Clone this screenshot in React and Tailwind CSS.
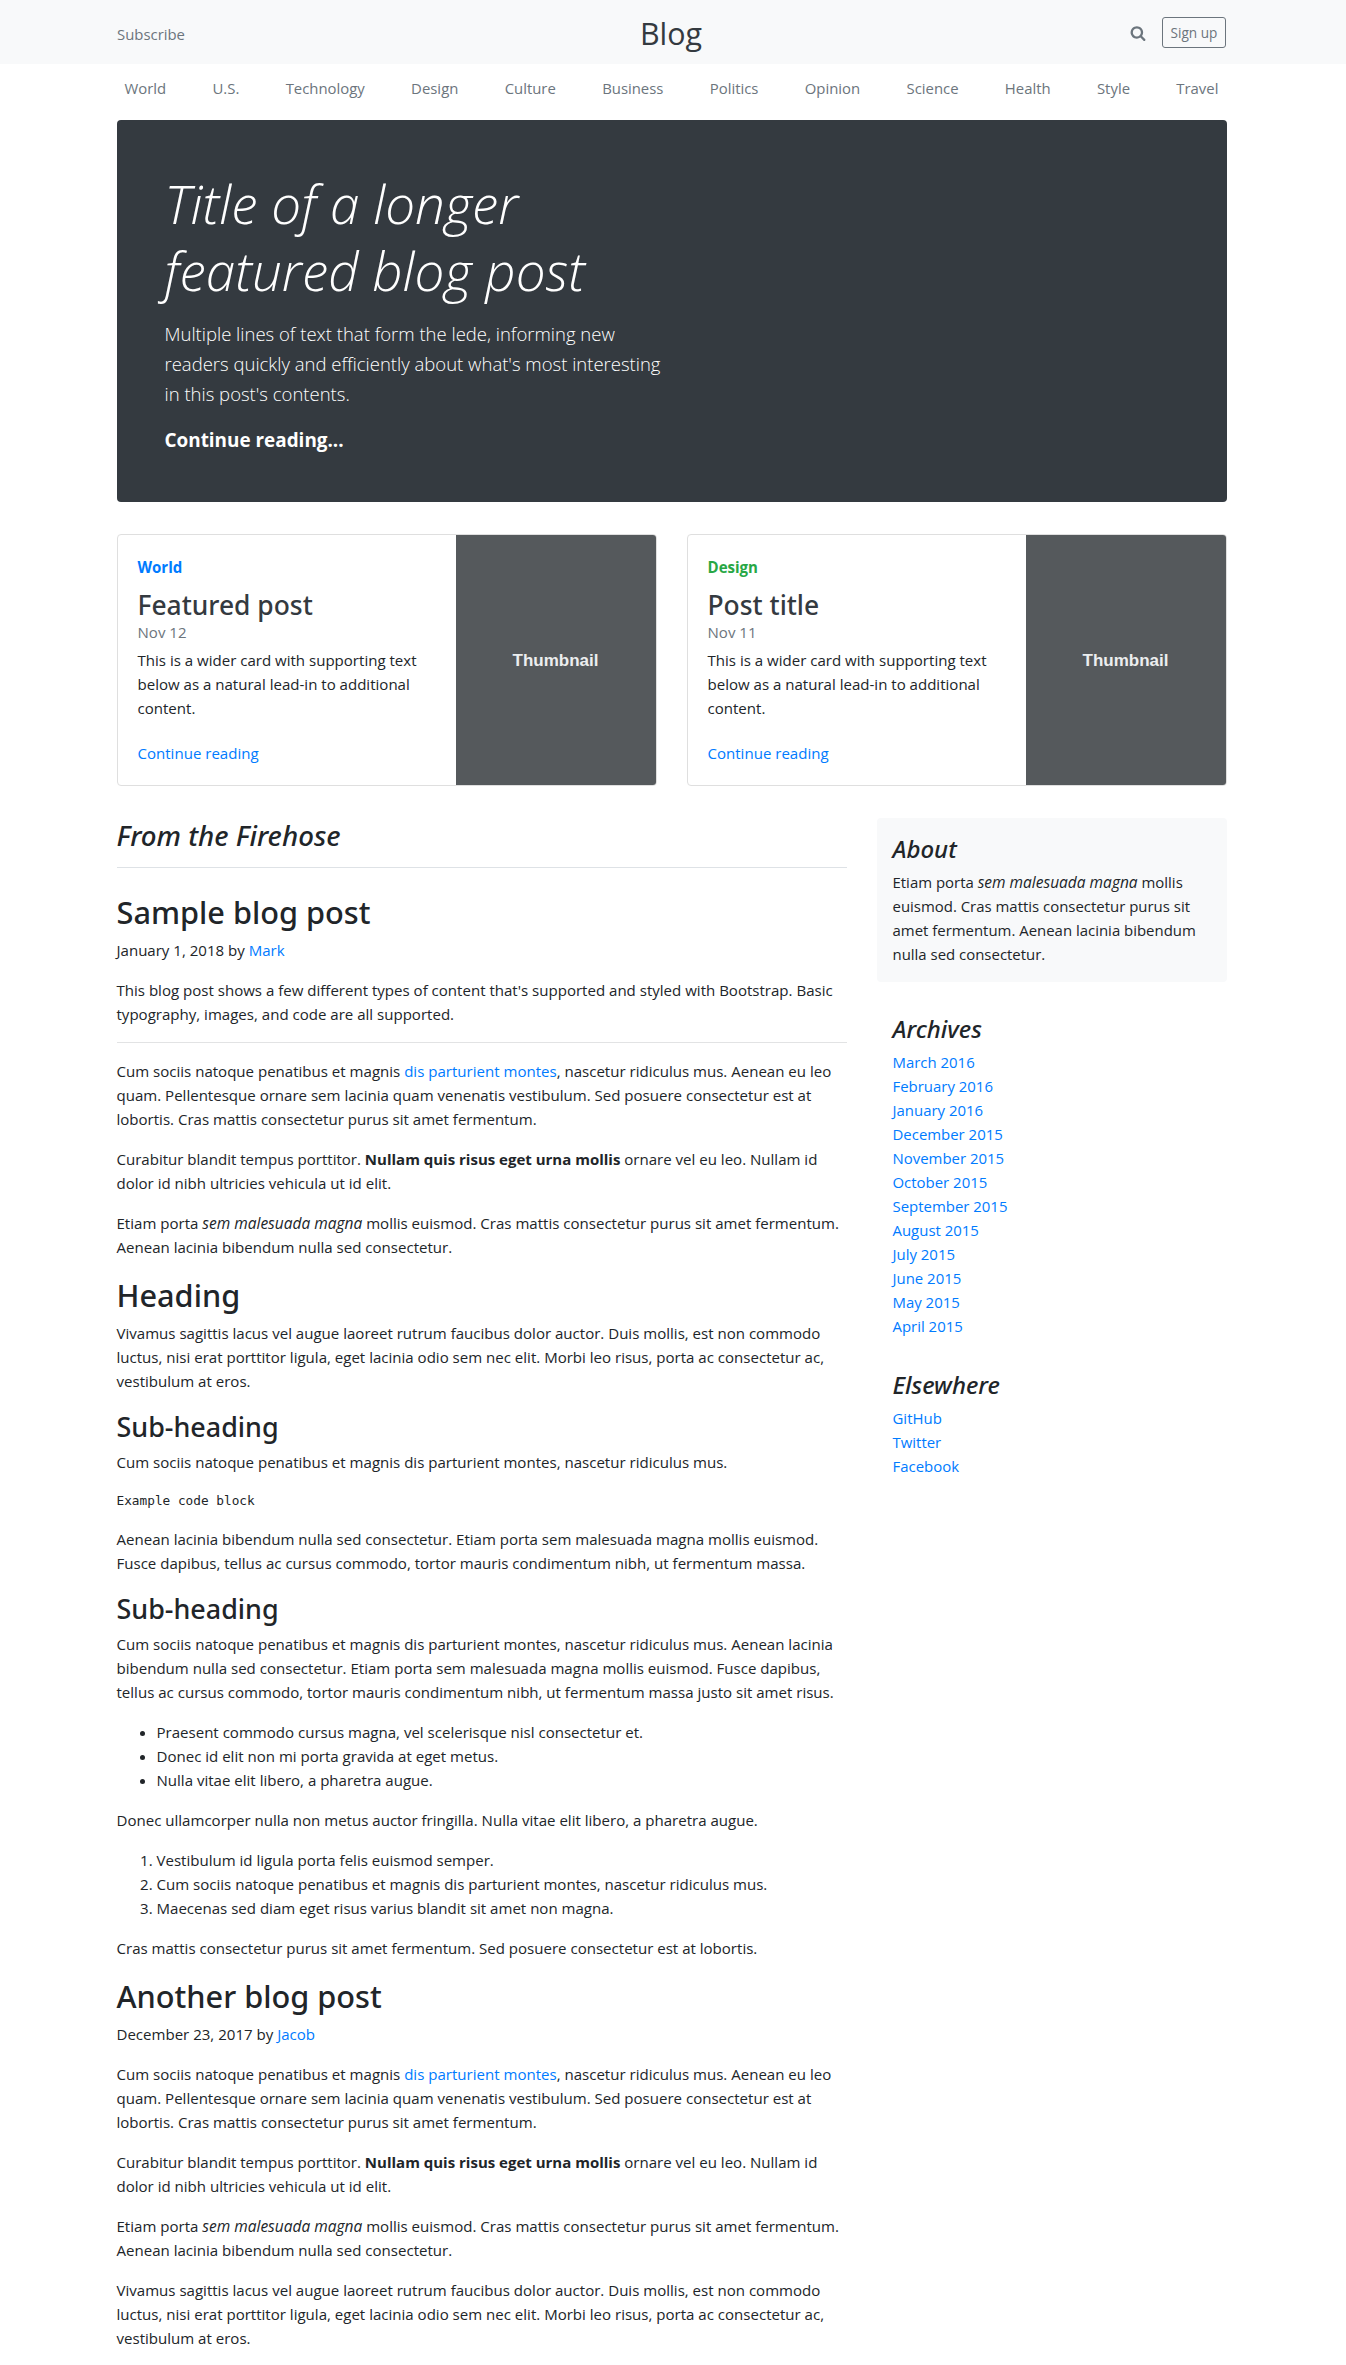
import React from "react";

const NAV = ["World", "U.S.", "Technology", "Design", "Culture", "Business", "Politics", "Opinion", "Science", "Health", "Style", "Travel"];
const ARCHIVES = [
  "March 2016", "February 2016", "January 2016", "December 2015", "November 2015", "October 2015",
  "September 2015", "August 2015", "July 2015", "June 2015", "May 2015", "April 2015",
];
const ELSEWHERE = ["GitHub", "Twitter", "Facebook"];

const Link = ({ children }) => <a className="text-[#007bff]">{children}</a>;
const Em = ({ children }) => <em className="text-[15.5px] leading-none italic">{children}</em>;

function Lines({ lines }) {
  return lines.map((line, i) => (
    <span key={i} className="block whitespace-nowrap">{line}</span>
  ));
}

function P({ lines }) {
  return <p className="mb-4"><Lines lines={lines} /></p>;
}

function H2({ children }) {
  return <h2 className="mb-[7px] pt-px font-['Noto_Sans',sans-serif] text-[30.7px] leading-[38px] font-medium">{children}</h2>;
}

function H3({ children }) {
  return <h3 className="mb-[7px] pt-px font-['Noto_Sans',sans-serif] text-[26.9px] leading-[33px] font-medium">{children}</h3>;
}

function H4({ children }) {
  return <h4 className="mb-[7px] pt-px font-['Noto_Sans',sans-serif] text-[24px] leading-[28px] font-medium italic">{children}</h4>;
}

function SearchIcon() {
  return (
    <svg className="mr-4 size-4" viewBox="0 0 1792 1792" fill="#6c757d">
      <path d="M1216 832q0-185-131.500-316.500t-316.500-131.500-316.500 131.500-131.500 316.500 131.500 316.500 316.500 131.500 316.500-131.500 131.500-316.500zm512 832q0 52-38 90t-90 38q-54 0-90-38l-343-342q-179 124-399 124-143 0-273.500-55.500t-225-150-150-225-55.500-273.500 55.500-273.500 150-225 225-150 273.500-55.500 273.500 55.500 225 150 150 225 55.500 273.500q0 220-124 399l343 343q37 37 37 90z" />
    </svg>
  );
}

function Header() {
  return (
    <header className="bg-[#f8f9fa] text-[#6c757d]">
      <div className="ml-[116px] grid h-16 w-[1110px] grid-cols-3 items-center">
        <a className="pt-[3px] pl-px text-[14.9px]">Subscribe</a>
        <a className="pt-[3px] text-center text-[30.400px] leading-[48px] text-[#343a40]">Blog</a>
        <div className="flex items-center justify-end pt-px">
          <SearchIcon />
          <a className="flex h-[31px] w-[64px] items-center justify-center rounded-[3px] border border-[#6c757d] text-[13.6px]">Sign up</a>
        </div>
      </div>
    </header>
  );
}

function Hero() {
  return (
    <section className="mb-8 h-[382px] rounded bg-[#343a40] p-12 text-white">
      <h1 className="mb-[15px] pt-[2px] text-[53px] leading-[67px] font-light italic">
        <Lines lines={["Title of a longer", "featured blog post"]} />
      </h1>
      <p className="mb-4 text-[18.500px] leading-[30px] font-light">
        <Lines lines={["Multiple lines of text that form the lede, informing new", "readers quickly and efficiently about what's most interesting", "in this post's contents."]} />
      </p>
      <p className="text-[18.900px] leading-[30px] font-bold">Continue reading...</p>
    </section>
  );
}

function Card({ category, color, title, date }) {
  return (
    <div className="flex h-[252px] overflow-hidden rounded border border-[#dfdfdf]">
      <div className="flex flex-1 flex-col items-start p-5">
        <strong className={`mb-2 font-bold ${color}`}>{category}</strong>
        <h3 className="pt-[4px] font-['Noto_Sans',sans-serif] text-[26.400px] leading-[29px] font-medium text-[#343a40]">{title}</h3>
        <div className="mb-1 text-[#6c757d]">{date}</div>
        <p className="mb-auto">
          <Lines lines={["This is a wider card with supporting text", "below as a natural lead-in to additional", "content."]} />
        </p>
        <Link>Continue reading</Link>
      </div>
      <div className="flex w-[200px] items-center justify-center bg-[#55595c] pt-px font-['Liberation_Sans',sans-serif] text-[17px] font-bold text-[#eceeef]">Thumbnail</div>
    </div>
  );
}

const Cum = () => (
  <P lines={[
    <>Cum sociis natoque penatibus et magnis <Link>dis parturient montes</Link>, nascetur ridiculus mus. Aenean eu leo</>,
    "quam. Pellentesque ornare sem lacinia quam venenatis vestibulum. Sed posuere consectetur est at",
    "lobortis. Cras mattis consectetur purus sit amet fermentum.",
  ]} />
);
const Curabitur = () => (
  <P lines={[
    <>Curabitur blandit tempus porttitor. <strong className="text-[15px] font-bold">Nullam quis risus eget urna mollis</strong> ornare vel eu leo. Nullam id</>,
    "dolor id nibh ultricies vehicula ut id elit.",
  ]} />
);
const Etiam = () => (
  <P lines={[
    <>Etiam porta <Em>sem malesuada magna</Em> mollis euismod. Cras mattis consectetur purus sit amet fermentum.</>,
    "Aenean lacinia bibendum nulla sed consectetur.",
  ]} />
);
const Vivamus = () => (
  <P lines={[
    "Vivamus sagittis lacus vel augue laoreet rutrum faucibus dolor auctor. Duis mollis, est non commodo",
    "luctus, nisi erat porttitor ligula, eget lacinia odio sem nec elit. Morbi leo risus, porta ac consectetur ac,",
    "vestibulum at eros.",
  ]} />
);

function Posts() {
  return (
    <main className="w-[730px]">
      <h3 className="mb-6 border-b border-[#dee2e6] pt-px pb-[15px] font-['Noto_Sans',sans-serif] text-[27.700px] leading-[33px] font-medium italic">From the Firehose</h3>
      <article>
        <H2>Sample blog post</H2>
        <p className="mb-4">January 1, 2018 by <Link>Mark</Link></p>
        <P lines={["This blog post shows a few different types of content that's supported and styled with Bootstrap. Basic", "typography, images, and code are all supported."]} />
        <hr className="mb-4 border-t border-[#e2e3e4]" />
        <Cum />
        <Curabitur />
        <Etiam />
        <H2>Heading</H2>
        <Vivamus />
        <H3>Sub-heading</H3>
        <P lines={["Cum sociis natoque penatibus et magnis dis parturient montes, nascetur ridiculus mus."]} />
        <pre className="mb-4 font-['DejaVu_Sans_Mono',monospace] text-[12.750px] leading-[21px]">Example code block</pre>
        <P lines={["Aenean lacinia bibendum nulla sed consectetur. Etiam porta sem malesuada magna mollis euismod.", "Fusce dapibus, tellus ac cursus commodo, tortor mauris condimentum nibh, ut fermentum massa."]} />
        <H3>Sub-heading</H3>
        <P lines={[
          "Cum sociis natoque penatibus et magnis dis parturient montes, nascetur ridiculus mus. Aenean lacinia",
          "bibendum nulla sed consectetur. Etiam porta sem malesuada magna mollis euismod. Fusce dapibus,",
          "tellus ac cursus commodo, tortor mauris condimentum nibh, ut fermentum massa justo sit amet risus.",
        ]} />
        <ul className="mb-4 list-disc pl-10">
          <li>Praesent commodo cursus magna, vel scelerisque nisl consectetur et.</li>
          <li>Donec id elit non mi porta gravida at eget metus.</li>
          <li>Nulla vitae elit libero, a pharetra augue.</li>
        </ul>
        <P lines={["Donec ullamcorper nulla non metus auctor fringilla. Nulla vitae elit libero, a pharetra augue."]} />
        <ol className="mb-4 list-decimal pl-10">
          <li>Vestibulum id ligula porta felis euismod semper.</li>
          <li>Cum sociis natoque penatibus et magnis dis parturient montes, nascetur ridiculus mus.</li>
          <li>Maecenas sed diam eget risus varius blandit sit amet non magna.</li>
        </ol>
        <P lines={["Cras mattis consectetur purus sit amet fermentum. Sed posuere consectetur est at lobortis."]} />
      </article>
      <article>
        <H2>Another blog post</H2>
        <p className="mb-4">December 23, 2017 by <Link>Jacob</Link></p>
        <Cum />
        <Curabitur />
        <Etiam />
        <Vivamus />
      </article>
    </main>
  );
}

function LinkList({ title, items }) {
  return (
    <section className="p-4">
      <H4>{title}</H4>
      <ol>{items.map((t) => <li key={t}><Link>{t}</Link></li>)}</ol>
    </section>
  );
}

function Sidebar() {
  return (
    <aside className="w-[350px] text-[14.950px]">
      <section className="mb-4 rounded bg-[#f8f9fa] p-4">
        <H4>About</H4>
        <p>
          <Lines lines={[
            <>Etiam porta <Em>sem malesuada magna</Em> mollis</>,
            "euismod. Cras mattis consectetur purus sit",
            "amet fermentum. Aenean lacinia bibendum",
            "nulla sed consectetur.",
          ]} />
        </p>
      </section>
      <LinkList title="Archives" items={ARCHIVES} />
      <LinkList title="Elsewhere" items={ELSEWHERE} />
    </aside>
  );
}

export default function App() {
  return (
    <div className="h-[2365px] overflow-hidden bg-white font-['Open_Sans','Noto_Sans',sans-serif] text-[15.050px] leading-6 text-[#212529]">
      <Header />
      <div className="ml-[116.500px] w-[1110px]">
        <nav className="mb-2 flex h-12 items-center justify-between text-[14.900px] text-[#6c757d]">
          {NAV.map((n) => <a key={n} className="px-2">{n}</a>)}
        </nav>
        <Hero />
        <div className="mb-8 grid grid-cols-2 gap-[30px]">
          <Card category="World" color="text-[#007bff]" title="Featured post" date="Nov 12" />
          <Card category="Design" color="text-[#28a745]" title="Post title" date="Nov 11" />
        </div>
        <div className="flex items-start gap-[30px]">
          <Posts />
          <Sidebar />
        </div>
      </div>
    </div>
  );
}
